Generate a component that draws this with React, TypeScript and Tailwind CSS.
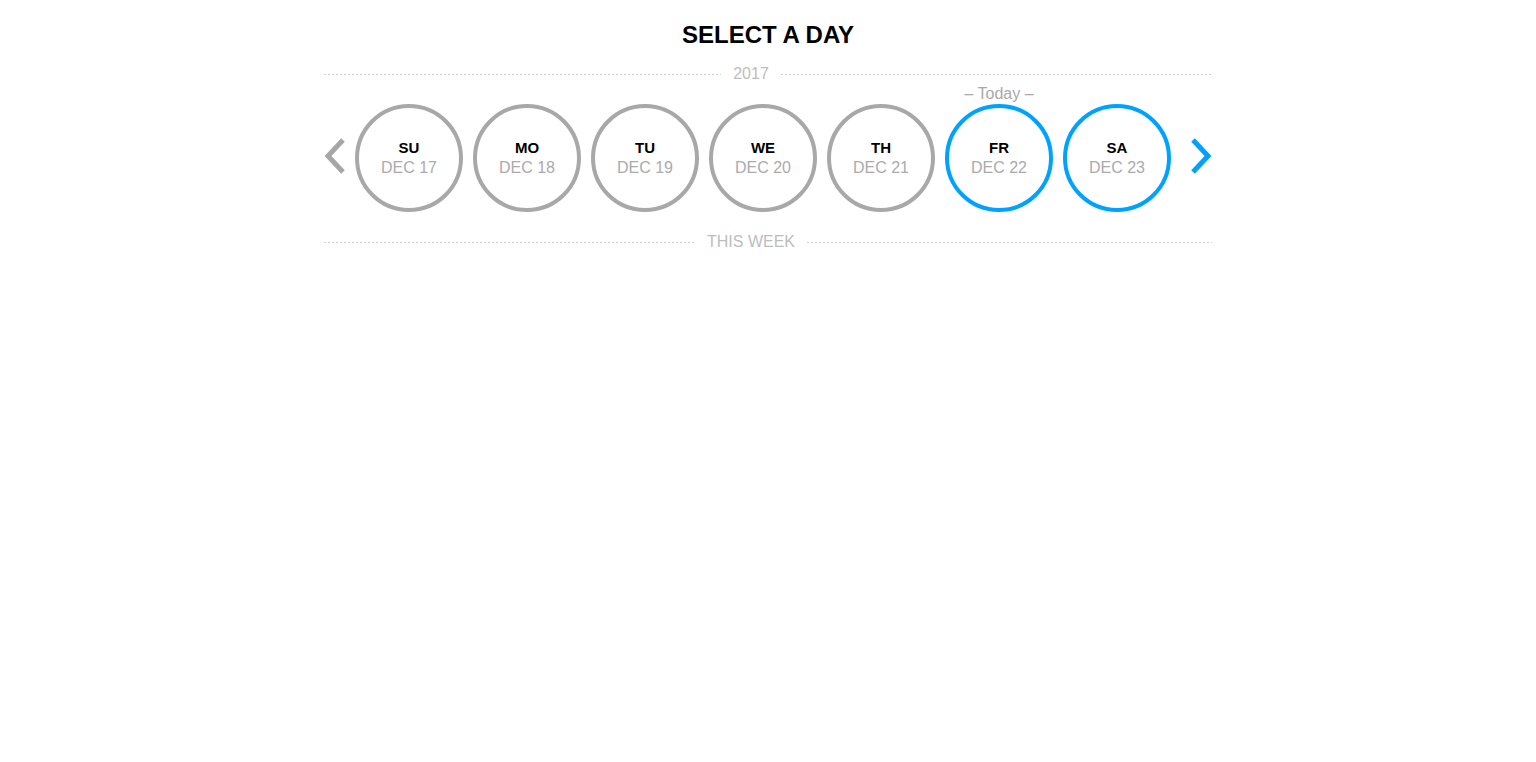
import { useState } from "react";

const days = [
  { day: "SU", date: "DEC 17" },
  { day: "MO", date: "DEC 18" },
  { day: "TU", date: "DEC 19" },
  { day: "WE", date: "DEC 20" },
  { day: "TH", date: "DEC 21" },
  { day: "FR", date: "DEC 22", today: true },
  { day: "SA", date: "DEC 23" },
];

const todayIndex = 5;

function Divider({ label }: { label: string }) {
  return (
    <div className="flex items-center gap-[12px]">
      <div className="h-px flex-[1_1_0px] bg-[repeating-linear-gradient(to_right,#cfcfcf_0_2px,transparent_2px_4px)]" />
      <span className="text-[16px] leading-[18px] text-[#bdbdbd]">{label}</span>
      <div className="h-px flex-[1_1_34px] bg-[repeating-linear-gradient(to_right,#cfcfcf_0_2px,transparent_2px_4px)]" />
    </div>
  );
}

function Chevron({ dir, color }: { dir: "left" | "right"; color: string }) {
  const points = dir === "left" ? "19,2 4,18 19,34" : "3,2 18,18 3,34";
  return (
    <svg width="22" height="36" viewBox="0 0 22 36" fill="none">
      <polyline points={points} stroke={color} strokeWidth="5" strokeLinejoin="miter" />
    </svg>
  );
}

export default function App() {
  const [selected, setSelected] = useState(todayIndex);

  return (
    <div className="min-h-screen bg-white font-['Liberation_Sans',Arial,sans-serif]">
      <div className="mx-auto w-[888px] pt-[20px]">
        <h1 className="text-center text-[24px] font-bold leading-[30px] text-black">SELECT A DAY</h1>

        <div className="mt-[15px]">
          <Divider label="2017" />
        </div>

        <div className="mt-[1px] flex items-end">
          <button className="mb-[38px]">
            <Chevron dir="left" color="#a6a6a6" />
          </button>

          <div className="ml-[9px] flex gap-[10px]">
            {days.map((d, i) => {
              const active = i >= selected;
              return (
                <div key={d.day} className="flex flex-col items-center">
                  <div className="h-[20px] text-[16px] leading-[20px] text-[#a9a9a9]">
                    {d.today ? "– Today –" : ""}
                  </div>
                  <button
                    onClick={() => setSelected(i)}
                    className={`flex h-[108px] w-[108px] flex-col items-center justify-center rounded-full border-[4px] ${
                      active ? "border-[#00a2ff]" : "border-[#a8a8a8]"
                    }`}
                  >
                    <span className="text-[15px] font-bold leading-[20px] text-black">{d.day}</span>
                    <span className="text-[16px] leading-[20px] text-[#ababab]">{d.date}</span>
                  </button>
                </div>
              );
            })}
          </div>

          <button className="mb-[38px] ml-auto">
            <Chevron dir="right" color="#00a2ff" />
          </button>
        </div>

        <div className="mt-[21px]">
          <Divider label="THIS WEEK" />
        </div>
      </div>
    </div>
  );
}
